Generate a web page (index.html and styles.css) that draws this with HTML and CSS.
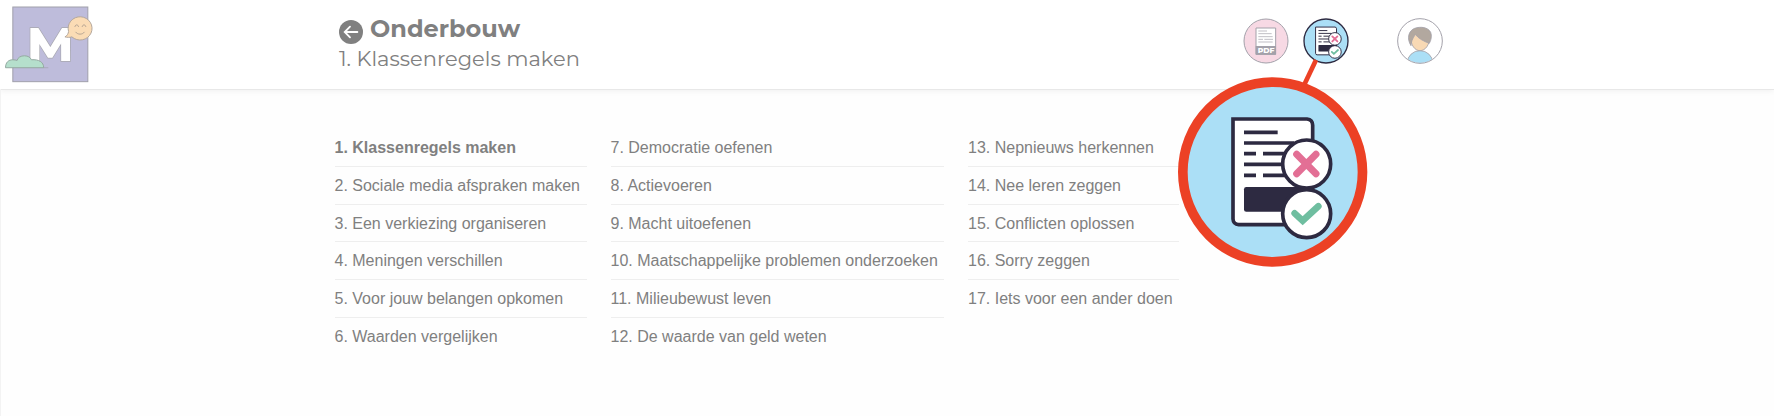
FILE: index.html
```html
<!DOCTYPE html>
<html lang="nl">
<head>
    <meta charset="UTF-8">
    <meta name="viewport" content="width=device-width, initial-scale=1.0">
    <title>Onderbouw - Klassenregels maken</title>
    <link rel="stylesheet" href="styles.css">
</head>
<body>
    <header class="header">
        <svg class="logo" viewBox="13 16 268 232">
            <rect x="38" y="19" width="226" height="225" fill="#bebcdb" stroke="#a0a0ab" stroke-width="3"/>
            <text class="logo-letter" x="81" y="181" textLength="140" lengthAdjust="spacingAndGlyphs">M</text>
            <path d="M16 202c0-16 9-24 22-24 5 0 9 1 13 2 2-9 11-14 22-14s18 5 21 12c22-2 37 7 37 24z" fill="#b5dfcc" stroke="#93a8a0" stroke-width="3"/>
            <path d="M131 202h14" stroke="#a0a0ab" stroke-width="2"/>
            <path d="M195 109c7-3 10-10 11-16a36 35 0 1 1 10 16c-6 2-14 2-21 0z" fill="#fbdcb5" stroke="#b3a79c" stroke-width="3"/>
            <path d="M225 79c1-8 10-8 11 0M247 79c1-8 10-8 11 0M227 94c6 9 21 9 27 0" fill="none" stroke="#a89a8c" stroke-width="2.5"/>
        </svg>
        <div class="titles">
            <h1>
                <svg class="back" viewBox="0 0 24 24">
                    <circle cx="12" cy="12" r="12" fill="#808080"/>
                    <path d="M18.4 12H6M11 6.7 5.7 12l5.3 5.3" fill="none" stroke="#fff" stroke-width="1.8" stroke-linecap="round"/>
                </svg>
                <span>Onderbouw</span>
            </h1>
            <h2>1. Klassenregels maken</h2>
        </div>
        <div class="icons">
            <svg class="icon" viewBox="38 40 138 138">
                <circle cx="107" cy="109" r="66" fill="#f7d9e4" stroke="#a3a1aa" stroke-width="3"/>
                <path d="M77 70h59v79H77z" fill="#fff" stroke="#a3a1aa" stroke-width="3"/>
                <path d="M76 124h61v26H76z" fill="#a3a1aa"/>
                <path d="M84 79h26M84 87h40M84 96h43M84 104h14M102 104h26M84 112h43" stroke="#b3b1b9" stroke-width="2.5"/>
                <text class="pdf-label" x="82" y="144" textLength="50" lengthAdjust="spacingAndGlyphs">PDF</text>
            </svg>
            <svg class="icon icon-answers" viewBox="0 0 138 138">
                <circle cx="69" cy="69" r="66" fill="#abdff6" stroke="#2d2a41" stroke-width="4"/>
                <use href="#answers" x="2" y="2" width="134" height="134"/>
            </svg>
            <svg class="icon icon-avatar" viewBox="501 39 138 138">
                <defs>
                    <clipPath id="avatar-clip"><circle cx="570" cy="108" r="66"/></clipPath>
                </defs>
                <circle cx="570" cy="108" r="66" fill="#fff"/>
                <g clip-path="url(#avatar-clip)" stroke="#a3a1aa" stroke-width="2.5">
                    <ellipse cx="570" cy="173" rx="38" ry="36" fill="#abdff6"/>
                    <path d="M542 95c0 25 12 42 28 42s29-17 29-42l-10-15h-36z" fill="#f8d9b4"/>
                    <path d="M543 122c-14-22-7-45 11-52 17-6 40-4 48 12 4 9 2 23-4 33-14-5-33-14-42-27-4 8-12 16-13 34z" fill="#b2a89f"/>
                </g>
                <circle cx="570" cy="108" r="67" fill="none" stroke="#a3a1aa" stroke-width="3"/>
            </svg>
        </div>
    </header>

    <main class="lessons">
        <ul class="column column-1">
            <li class="active">1. Klassenregels maken</li>
            <li>2. Sociale media afspraken maken</li>
            <li>3. Een verkiezing organiseren</li>
            <li>4. Meningen verschillen</li>
            <li>5. Voor jouw belangen opkomen</li>
            <li>6. Waarden vergelijken</li>
        </ul>
        <ul class="column column-2">
            <li>7. Democratie oefenen</li>
            <li>8. Actievoeren</li>
            <li>9. Macht uitoefenen</li>
            <li>10. Maatschappelijke problemen onderzoeken</li>
            <li>11. Milieubewust leven</li>
            <li>12. De waarde van geld weten</li>
        </ul>
        <ul class="column column-3">
            <li>13. Nepnieuws herkennen</li>
            <li>14. Nee leren zeggen</li>
            <li>15. Conflicten oplossen</li>
            <li>16. Sorry zeggen</li>
            <li>17. Iets voor een ander doen</li>
        </ul>
    </main>

    <!-- Magnified view of the answers button -->
    <svg class="callout" viewBox="0 0 630 645">
        <defs>
            <symbol id="answers" viewBox="53 51 510 510">
                <path d="M189 147h222q17 2 17 19v298H206q-16-1-17-17z" fill="#fff" stroke="#2d2a41" stroke-width="11"/>
                <path d="M222 187h101M222 219h150M222 251h36M279 251h80M222 283h120M222 316h36M279 316h80" stroke="#2d2a41" stroke-width="11"/>
                <path d="M427 351H229q-7 0-7 7v61q0 6 7 6h190z" fill="#2d2a41"/>
                <circle cx="410" cy="282" r="72" fill="#fff" stroke="#2d2a41" stroke-width="11"/>
                <circle cx="410" cy="431" r="72" fill="#fff" stroke="#2d2a41" stroke-width="11"/>
                <path d="M380 253l58 58M438 253l-58 58" stroke="#e36f95" stroke-width="21" stroke-linecap="round"/>
                <path d="M374 430l24 22 47-43" fill="none" stroke="#6fbea0" stroke-width="20" stroke-linecap="round"/>
            </symbol>
        </defs>
        <path d="M438 15l-36 76" stroke="#ec4125" stroke-width="14"/>
        <g transform="translate(0 45)">
            <circle cx="308" cy="306" r="269.5" fill="#abdff6" stroke="#ec4125" stroke-width="29"/>
            <use href="#answers" x="53" y="51" width="510" height="510"/>
        </g>
    </svg>
</body>
</html>
```
FILE: styles.css
```css
* {
    box-sizing: border-box;
}

body {
    margin: 0;
    height: 416px;
    position: relative;
    overflow: hidden;
    background: #fefefe;
    color: #808080;
    font-family: "Liberation Sans", Arial, sans-serif;
}

.header {
    display: flex;
    align-items: flex-start;
    height: 89px;
    padding-left: 4px;
    background: #fff;
    box-shadow: 0 1px 0 #e8e8e8, 0 2px 6px rgba(0, 0, 0, 0.06);
}

.logo {
    width: 90px;
    height: 77px;
    margin-top: 6px;
}

.logo-letter {
    font: 800 143px Montserrat, "Liberation Sans", sans-serif;
    fill: #fff;
    stroke: #a8a8b0;
    stroke-width: 4px;
    paint-order: stroke;
}

.titles {
    width: 600px;
    margin-left: 245px;
    padding-top: 14px;
    font-family: Montserrat, Inter, sans-serif;
}

.titles h1 {
    display: flex;
    align-items: center;
    gap: 7px;
    margin: 0;
    font-size: 24px;
    line-height: 30px;
    font-weight: 700;
}

.back {
    width: 24px;
    height: 24px;
    margin-top: 5px;
}

.titles h2 {
    margin: 0;
    font-size: 21px;
    line-height: 30px;
    font-weight: 400;
}

.icons {
    display: flex;
    margin-left: 303.5px;
    padding-top: 18px;
}

.icon {
    width: 46px;
    height: 46px;
}

.icon-answers {
    margin-left: 14.5px;
}

.icon-avatar {
    margin-left: 48px;
}

.pdf-label {
    font: 800 20px Montserrat, Inter, sans-serif;
    fill: #fff;
}

.lessons {
    display: flex;
    align-items: flex-start;
    gap: 24px;
    padding: 40px 0 0 333.5px;
    border-left: 1px solid #f3f3f3;
    height: 327px;
}

.column {
    margin: 0;
    padding: 0;
    list-style: none;
    font-size: 16px;
}

.column li {
    height: 37.8px;
    line-height: 37px;
    border-bottom: 1px solid #eee;
    white-space: nowrap;
}

.column li:last-child {
    border-bottom: none;
}

.column .active {
    font-weight: bold;
}

.column-1 {
    width: 252px;
}

.column-2 {
    width: 333.5px;
}

.column-3 {
    width: 211px;
}

.callout {
    position: absolute;
    left: 1170px;
    top: 55px;
    width: 210px;
    height: 215px;
}
```
